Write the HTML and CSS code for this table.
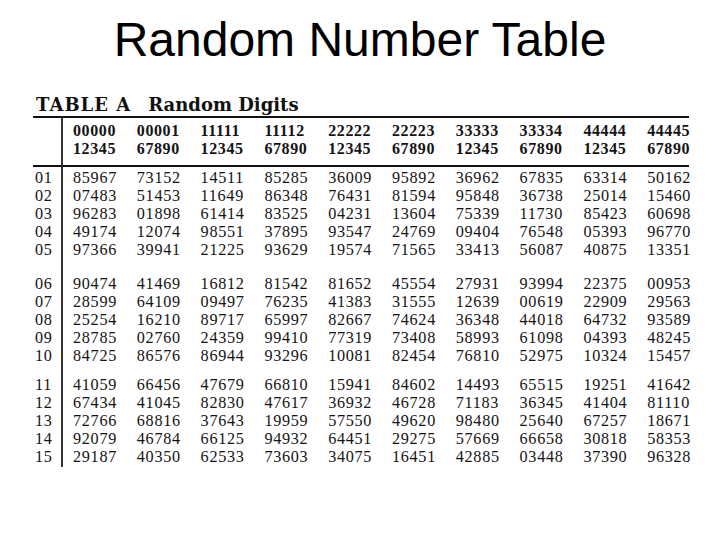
FILE: index.html
```html
<!DOCTYPE html>
<html lang="en">
<head>
<meta charset="utf-8">
<title>Random Number Table</title>
<link rel="stylesheet" href="styles.css">
</head>
<body>
<h1 class="title">Random Number Table</h1>
<table class="digits">
  <caption class="caption"><span class="cap-a">TABLE A</span><span class="cap-b">Random Digits</span></caption>
  <colgroup>
    <col class="c-label">
    <col class="c-num"><col class="c-num"><col class="c-num"><col class="c-num"><col class="c-num">
    <col class="c-num"><col class="c-num"><col class="c-num"><col class="c-num">
    <col class="c-last">
  </colgroup>
  <thead>
    <tr>
      <th class="label"></th>
      <th>00000<br>12345</th>
      <th>00001<br>67890</th>
      <th>11111<br>12345</th>
      <th>11112<br>67890</th>
      <th>22222<br>12345</th>
      <th>22223<br>67890</th>
      <th>33333<br>12345</th>
      <th>33334<br>67890</th>
      <th>44444<br>12345</th>
      <th>44445<br>67890</th>
    </tr>
  </thead>
  <tbody>
    <tr class="g1"><td class="label">01</td><td>85967</td><td>73152</td><td>14511</td><td>85285</td><td>36009</td><td>95892</td><td>36962</td><td>67835</td><td>63314</td><td>50162</td></tr>
    <tr><td class="label">02</td><td>07483</td><td>51453</td><td>11649</td><td>86348</td><td>76431</td><td>81594</td><td>95848</td><td>36738</td><td>25014</td><td>15460</td></tr>
    <tr><td class="label">03</td><td>96283</td><td>01898</td><td>61414</td><td>83525</td><td>04231</td><td>13604</td><td>75339</td><td>11730</td><td>85423</td><td>60698</td></tr>
    <tr><td class="label">04</td><td>49174</td><td>12074</td><td>98551</td><td>37895</td><td>93547</td><td>24769</td><td>09404</td><td>76548</td><td>05393</td><td>96770</td></tr>
    <tr><td class="label">05</td><td>97366</td><td>39941</td><td>21225</td><td>93629</td><td>19574</td><td>71565</td><td>33413</td><td>56087</td><td>40875</td><td>13351</td></tr>
    <tr class="g2"><td class="label">06</td><td>90474</td><td>41469</td><td>16812</td><td>81542</td><td>81652</td><td>45554</td><td>27931</td><td>93994</td><td>22375</td><td>00953</td></tr>
    <tr><td class="label">07</td><td>28599</td><td>64109</td><td>09497</td><td>76235</td><td>41383</td><td>31555</td><td>12639</td><td>00619</td><td>22909</td><td>29563</td></tr>
    <tr><td class="label">08</td><td>25254</td><td>16210</td><td>89717</td><td>65997</td><td>82667</td><td>74624</td><td>36348</td><td>44018</td><td>64732</td><td>93589</td></tr>
    <tr><td class="label">09</td><td>28785</td><td>02760</td><td>24359</td><td>99410</td><td>77319</td><td>73408</td><td>58993</td><td>61098</td><td>04393</td><td>48245</td></tr>
    <tr><td class="label">10</td><td>84725</td><td>86576</td><td>86944</td><td>93296</td><td>10081</td><td>82454</td><td>76810</td><td>52975</td><td>10324</td><td>15457</td></tr>
    <tr class="g3"><td class="label">11</td><td>41059</td><td>66456</td><td>47679</td><td>66810</td><td>15941</td><td>84602</td><td>14493</td><td>65515</td><td>19251</td><td>41642</td></tr>
    <tr><td class="label">12</td><td>67434</td><td>41045</td><td>82830</td><td>47617</td><td>36932</td><td>46728</td><td>71183</td><td>36345</td><td>41404</td><td>81110</td></tr>
    <tr><td class="label">13</td><td>72766</td><td>68816</td><td>37643</td><td>19959</td><td>57550</td><td>49620</td><td>98480</td><td>25640</td><td>67257</td><td>18671</td></tr>
    <tr><td class="label">14</td><td>92079</td><td>46784</td><td>66125</td><td>94932</td><td>64451</td><td>29275</td><td>57669</td><td>66658</td><td>30818</td><td>58353</td></tr>
    <tr class="last"><td class="label">15</td><td>29187</td><td>40350</td><td>62533</td><td>73603</td><td>34075</td><td>16451</td><td>42885</td><td>03448</td><td>37390</td><td>96328</td></tr>
  </tbody>
</table>
</body>
</html>
```

FILE: styles.css
```css
html, body {
  margin: 0;
  padding: 0;
  background: #ffffff;
}

body {
  width: 720px;
  height: 540px;
  overflow: hidden;
  color: #000000;
}

.title {
  margin: 0;
  padding-top: 16px;
  font-family: "Liberation Sans", Arial, sans-serif;
  font-size: 48px;
  font-weight: normal;
  line-height: 48px;
  text-align: center;
}

.digits {
  margin: 30px 0 0 33px;
  border-collapse: separate;
  border-spacing: 0;
  table-layout: fixed;
  width: 656px;
  font-family: "Liberation Serif", "Times New Roman", serif;
  color: #141414;
}

.c-label { width: 30px; }
.c-num { width: 63.8px; }
.c-last { width: 51.8px; }

.caption {
  caption-side: top;
  text-align: left;
  padding: 0 0 1px 3px;
  font-family: "DejaVu Serif", "Liberation Serif", serif;
  font-weight: bold;
  font-size: 18px;
  line-height: 21px;
  color: #111111;
  white-space: nowrap;
}

.cap-a {
  letter-spacing: 1px;
}

.cap-b {
  margin-left: 17px;
}

.digits th {
  text-align: left;
  font-weight: bold;
  font-size: 16px;
  letter-spacing: 0.6px;
  line-height: 18px;
  padding: 4px 0 7px 10px;
  border-top: 2px solid #111111;
  border-bottom: 2px solid #111111;
  white-space: nowrap;
}

.digits td {
  text-align: left;
  font-size: 16.2px;
  letter-spacing: 0.7px;
  line-height: 18px;
  padding: 0 0 0 10px;
  white-space: nowrap;
}

.digits .label {
  padding-left: 2px;
  border-right: 2px solid #333333;
}

.g1 td { padding-top: 2px; }
.g2 td { padding-top: 16px; }
.g3 td { padding-top: 11px; }
.last td { padding-bottom: 1px; }
```
